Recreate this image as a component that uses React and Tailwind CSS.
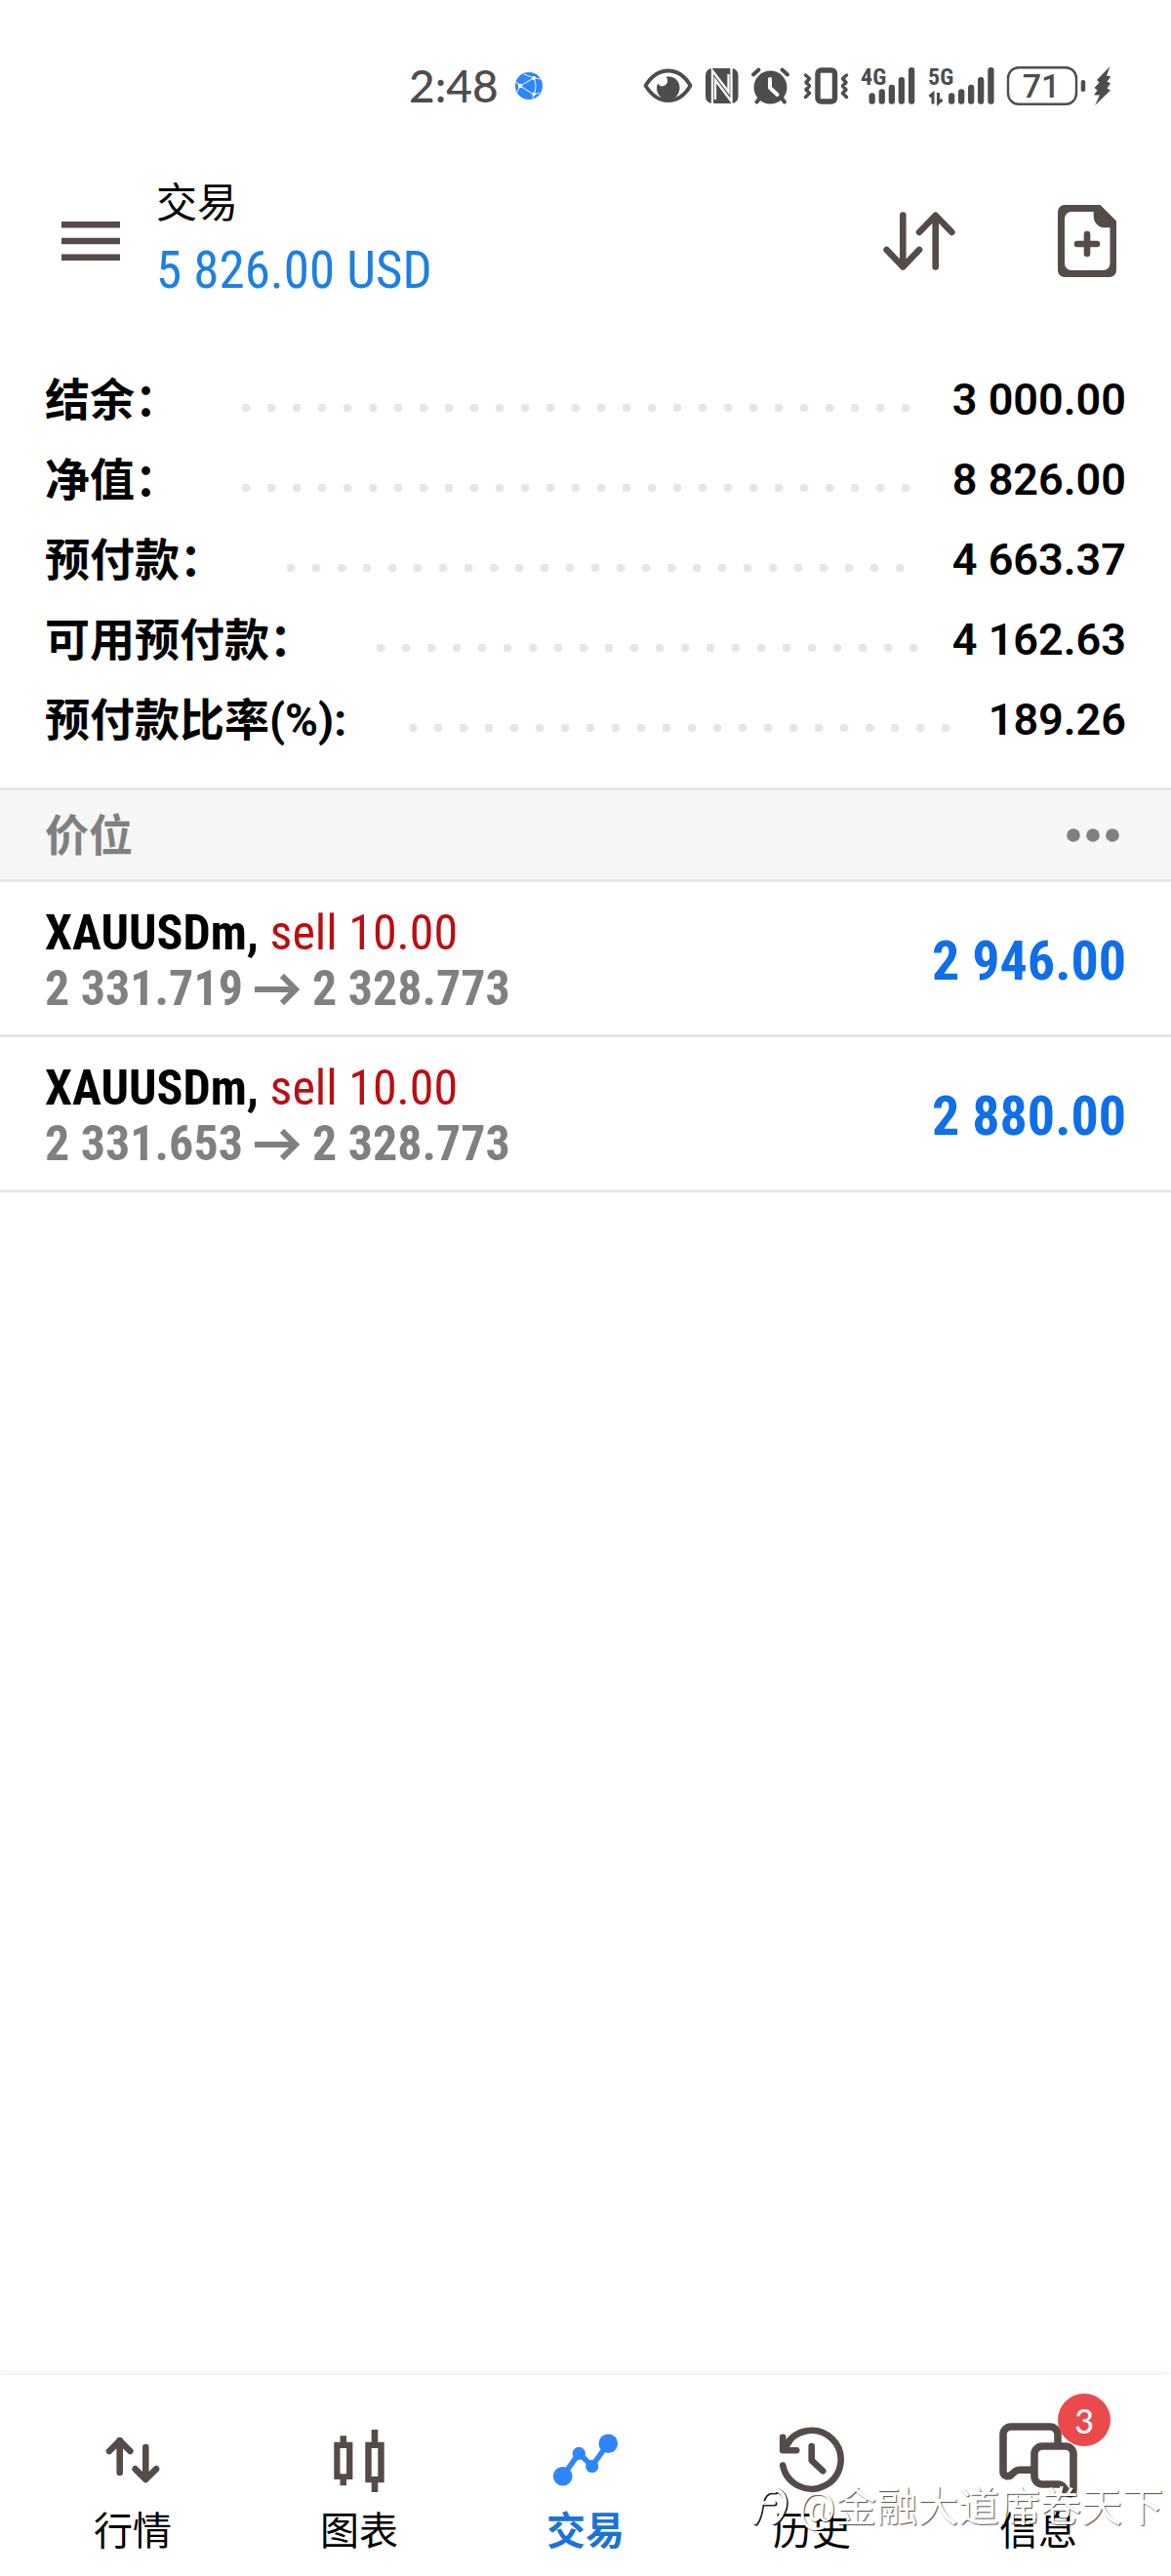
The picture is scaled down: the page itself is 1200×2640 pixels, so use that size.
const INK = '#554c49';
const STATUS = '#4d4d4d';

const summary = [
    { label: '结余：', value: '3 000.00' },
    { label: '净值：', value: '8 826.00' },
    { label: '预付款：', value: '4 663.37' },
    { label: '可用预付款：', value: '4 162.63' },
    { label: '预付款比率(%):', value: '189.26' },
];

const positions = [
    { id: 1, symbol: 'XAUUSDm', side: 'sell 10.00', open: '2 331.719', current: '2 328.773', profit: '2 946.00' },
    { id: 2, symbol: 'XAUUSDm', side: 'sell 10.00', open: '2 331.653', current: '2 328.773', profit: '2 880.00' },
];

const tabs = [
    { label: '行情', icon: QuotesIcon },
    { label: '图表', icon: ChartIcon },
    { label: '交易', icon: TradeIcon, active: true },
    { label: '历史', icon: HistoryIcon },
    { label: '信息', icon: ChatIcon, badge: 3 },
];

function QuotesIcon() {
    return (
        <svg className="size-20" viewBox="0 0 80 80" fill="none" stroke={INK} strokeWidth="6.6" strokeLinecap="round" strokeLinejoin="round">
            <path d="M26.7 53V20M16 31l10.7-10.7L37.4 31" />
            <path d="M53.3 27v33M42.6 49.3L53.3 60 64 49.300" />
        </svg>
    );
}

function ChartIcon() {
    return (
        <svg className="size-20" viewBox="0 0 80 80" fill={INK} fillRule="evenodd">
            <path d="M20.5 15.300h6.600v6.400h6.300V60h-6.300v6.300h-6.600V60h-6.200V21.700h6.200zM20.500 28v26.300h6.600V28z" />
            <path d="M52.700 9h6.600v12.700h6.400v41.600h-6.400V73h-6.600v-9.700h-6.400V21.700h6.400zM52.700 28v29h6.600V28z" />
        </svg>
    );
}

function TradeIcon() {
    return (
        <svg className="size-20" viewBox="0 0 80 80" fill="#2e86ff">
            <path d="M16.700 56.700L33.300 33.300l13.400 13L63.300 23" fill="none" stroke="#2e86ff" strokeWidth="5.5" />
            <circle cx="16.7" cy="56.7" r="9.8" />
            <circle cx="33.3" cy="33.3" r="6.6" />
            <circle cx="46.7" cy="46.7" r="6.6" />
            <circle cx="63.3" cy="23.3" r="9.8" />
        </svg>
    );
}

function HistoryIcon() {
    return (
        <svg className="size-20" viewBox="0 0 80 80" fill="none" stroke={INK} strokeWidth="6.6" strokeLinecap="round" strokeLinejoin="round">
            <path d="M10.200 45.500a30 30 0 1 0 2.800-19.500" />
            <path d="M10.200 16.700v13.600h14M12 28l5-7" />
            <path d="M39.700 26v14.500l11.600 10.800" />
        </svg>
    );
}

function ChatIcon() {
    return (
        <svg className="size-20" viewBox="0 0 80 80" fill="none" stroke={INK} strokeWidth="7.6" strokeLinejoin="round">
            <path d="M60 24V14a8 8 0 0 0-8-8H12a8 8 0 0 0-8 8v38c0 4.500 5 6 8 3.500l4-3.500q2-1.800 5-1.800h12" />
            <path d="M44 26h24a8 8 0 0 1 8 8v37c0 4-4 5-6.500 2l-3.500-5q-2-3-6-3H44a8 8 0 0 1-8-8V34a8 8 0 0 1 8-8z" />
        </svg>
    );
}

function StatusIcons() {
    return (
        <div className="flex h-10 items-center gap-3">
            <svg width="51" height="40" viewBox="0 0 51 40">
                <path d="M2.500 19.700C9 9.500 16 4.500 25.700 4.500S42.500 9.500 48.500 19.700C42.500 30 35.500 35 25.700 35S9 30 2.500 19.700z" fill="none" stroke={STATUS} strokeWidth="3.8" strokeLinejoin="round" />
                <path d="M23.500 10.800c8-2 14 4 14 11 0 7-5 12.500-11.700 12.500S14 29 14 22.500c0-2 .4-3.500 1.200-5 1.300 2.300 3.300 3.300 5.300 2.800 4.500-1 6-6 3-9.500z" fill={STATUS} />
            </svg>
            <svg width="35" height="40" viewBox="0 0 35 40">
                <rect x="1" y="2" width="33.5" height="36" rx="7" fill={STATUS} />
                <path d="M8 38V4.500L24.500 26V8" fill="none" stroke="#fff" strokeWidth="2.3" />
                <path d="M27.500 2v34L11 14v20" fill="none" stroke="#fff" strokeWidth="2.3" />
            </svg>
            <svg width="42" height="40" viewBox="0 0 42 40" fill="none" stroke={STATUS} strokeWidth="4" strokeLinecap="round">
                <circle cx="20.5" cy="21.5" r="17" fill={STATUS} stroke="none" />
                <path d="M3 8.500L8.500 3.500M32.500 3.500L38 8.500M6.500 36.500l4-5M35 36.500l-4-5" />
                <path d="M20 13v9l7.500 7" stroke="#fff" strokeLinejoin="round" />
            </svg>
            <svg width="47" height="40" viewBox="0 0 47 40" fill="none" stroke={STATUS}>
                <rect x="15" y="4" width="17.5" height="32" rx="3.5" strokeWidth="5.5" />
                <path d="M2.500 9l4 3.500-3.500 4L6.500 20 3 24l3.500 3.500-4 4M44.500 9l-4 3.500 3.500 4-3.500 3.500 3.500 4-3.500 3.500 4 4" strokeWidth="3.5" strokeLinecap="round" strokeLinejoin="round" />
            </svg>
            <svg width="57" height="40" viewBox="0 0 57 40" fill={STATUS} className="overflow-visible font-['Roboto_Condensed','Liberation_Sans_Narrow',sans-serif] text-[24px] font-bold">
                <text x="0" y="19">4G</text>
                <rect x="8.5" y="27.3" width="6.3" height="11.5" rx="3" />
                <rect x="18.6" y="23.3" width="6.3" height="15.5" rx="3" />
                <rect x="28.7" y="18.7" width="6.3" height="20" rx="3" />
                <rect x="38.7" y="11" width="6.3" height="27.8" rx="3" />
                <rect x="49" y="1" width="6.3" height="37.8" rx="3" />
            </svg>
            <svg width="68" height="40" viewBox="0 0 68 40" fill={STATUS} className="overflow-visible font-['Roboto_Condensed','Liberation_Sans_Narrow',sans-serif] text-[24px] font-bold">
                <text x="0" y="19">5G</text>
                <path d="M5 38.500V28L1.500 31M10.500 27v10.500L14.500 34" fill="none" stroke={STATUS} strokeWidth="3" />
                <rect x="21" y="27.3" width="6.3" height="11.5" rx="3" />
                <rect x="31" y="23.3" width="6.3" height="15.5" rx="3" />
                <rect x="41" y="18.7" width="6.3" height="20" rx="3" />
                <rect x="51" y="11" width="6.3" height="27.8" rx="3" />
                <rect x="61.3" y="1" width="6.3" height="37.8" rx="3" />
            </svg>
            <svg width="108" height="40" viewBox="0 0 108 40" fill={STATUS} className="font-['Roboto',sans-serif] text-[34px] font-medium">
                <rect x="2" y="1.2" width="70" height="37.6" rx="11" fill="none" stroke={STATUS} strokeWidth="2.4" />
                <text x="36" y="32" textAnchor="middle">71</text>
                <rect x="76.7" y="14" width="4.5" height="12" rx="2" />
                <path d="M106.500 0L93 14l2.500 2.500L90.500 22l3 2.500-3.500 5 6 0L91 40l16-15.500-3.500-2 3.500-5-3.500-2 4-5-4.500-1z" />
            </svg>
        </div>
    );
}

function StatusBar() {
    return (
        <div className="flex items-center justify-between pt-17 pr-[61px] pl-[419px]">
            <div className="flex h-10 items-center gap-4">
                <span className="font-['Lato',sans-serif] text-[46px] leading-10 font-medium text-[#4d4d4d]">2:48</span>
                <svg width="30" height="30" viewBox="0 0 30 30">
                    <circle cx="15" cy="15" r="14" fill="#2f86f6" />
                    <path d="M20 7L6 15l14 9M20 7q4 8 0 17M20 7L10 3M20 7l8 1M6 15L2 11M6 15l-3 6M20 24l6-2M20 24l-1 4" fill="none" stroke="#d5e8ff" strokeWidth="1.1" />
                    <circle cx="20" cy="7" r="2" fill="#fff" />
                    <circle cx="6" cy="15" r="2.2" fill="#fff" />
                    <circle cx="20" cy="23.5" r="1.8" fill="#fff" />
                </svg>
            </div>
            <StatusIcons />
        </div>
    );
}

function Header() {
    return (
        <header className="mt-[71px] flex items-center pr-14 pl-[63px]">
            <button type="button" aria-label="Menu">
                <svg width="60" height="40" viewBox="0 0 60 40" fill={INK}>
                    <path d="M0 0h60v6.600H0zM0 16.700h60v6.600H0zM0 33.400h60V40H0z" />
                </svg>
            </button>
            <div className="ml-[37px] flex-1">
                <h1 className="text-[42px] leading-[60px]">交易</h1>
                <p className="font-['Roboto_Condensed','Liberation_Sans_Narrow',sans-serif] text-[53px] leading-[76px] text-[#1c7fe6]">5 826.00 USD</p>
            </div>
            <div className="flex items-center gap-[105px]">
                <button type="button" aria-label="Sort">
                    <svg width="74" height="60" viewBox="0 0 74 60" fill="none" stroke={INK} strokeWidth="6.6" strokeLinecap="round" strokeLinejoin="round">
                        <path d="M20.300 3.500V56M3.600 39l16.700 17.500L37 39" />
                        <path d="M53.700 56.500V4M37 21L53.700 3.700 70.400 21" />
                    </svg>
                </button>
                <button type="button" aria-label="New order">
                    <svg width="60" height="74" viewBox="0 0 60 74">
                        <path d="M7 0h36.500L60 16.500V67a7 7 0 0 1-7 7H7a7 7 0 0 1-7-7V7a7 7 0 0 1 7-7zM14 7a7 7 0 0 0-7 7v46a7 7 0 0 0 7 7h32.500a7 7 0 0 0 7-7V23.300H48A11.500 11.500 0 0 1 36.700 12V7z" fill={INK} fillRule="evenodd" />
                        <path d="M30 30v20M20 40h20" stroke={INK} strokeWidth="6.6" strokeLinecap="round" />
                    </svg>
                </button>
            </div>
        </header>
    );
}

function Summary() {
    return (
        <dl className="mt-[54px] mb-7 px-[46px] text-[46px]">
            {summary.map((row) => (
                <div key={row.label} className="flex h-[82px] items-center">
                    <dt className="font-bold">{row.label}</dt>
                    <div className="mt-4 mr-8 ml-16 h-2 flex-1 bg-[radial-gradient(circle_at_4px_4px,#e6e6e6_4px,transparent_5px)] bg-[length:26px_8px] bg-repeat-x" />
                    <dd className="text-[45px] font-semibold">{row.value}</dd>
                </div>
            ))}
        </dl>
    );
}

function PositionRow({ position }) {
    return (
        <li className="flex items-center justify-between border-b-3 border-[#e6e6e6] px-[46px] pt-6 pb-[18px] font-['Roboto_Condensed','Liberation_Sans_Narrow',sans-serif]">
            <div className="text-[50px] leading-[57px] font-bold">
                <p>
                    {position.symbol}, <span className="font-normal text-[#bd0d12]">{position.side}</span>
                </p>
                <p className="flex items-center gap-3 text-[#808080]">
                    {position.open}
                    <svg width="47" height="32" viewBox="0 0 47 32" fill="none" stroke="#808080" strokeWidth="6">
                        <path d="M0 16h42M28 2l14 14-14 14" />
                    </svg>
                    {position.current}
                </p>
            </div>
            <p className="text-[56px] leading-[72px] font-bold text-[#0f6fe8]">{position.profit}</p>
        </li>
    );
}

function Positions() {
    return (
        <section>
            <div className="flex h-[97px] items-center justify-between border-y-3 border-[#e6e6e6] bg-[#f6f6f6] pr-[53px] pl-[46px] text-[#808080]">
                <h2 className="pt-1 text-[45px] font-bold">价位</h2>
                <button type="button" aria-label="More">
                    <svg width="54" height="14" viewBox="0 0 54 14" fill="#808080">
                        <circle cx="7" cy="7" r="6.8" />
                        <circle cx="27" cy="7" r="6.8" />
                        <circle cx="47" cy="7" r="6.8" />
                    </svg>
                </button>
            </div>
            <ul>
                {positions.map((p) => (
                    <PositionRow key={p.id} position={p} />
                ))}
            </ul>
        </section>
    );
}

function TabBar() {
    return (
        <nav className="mt-auto grid grid-cols-5 px-5 pt-[47px] pb-[23px] shadow-[0_-4px_8px_rgba(0,0,0,0.05)]">
            {tabs.map(({ label, icon: Icon, active, badge }) => (
                <a key={label} href="#" className="flex flex-col items-center gap-3">
                    <span className="relative">
                        <Icon />
                        {badge && (
                            <span className="absolute -top-7 left-15 flex size-[54px] items-center justify-center rounded-full bg-[#ea4a4b] font-['Lato',sans-serif] text-[34px] font-medium text-white">
                                {badge}
                            </span>
                        )}
                    </span>
                    <span className={active ? 'text-[40px] leading-11 font-bold text-[#1c72d8]' : 'text-[40px] leading-11'}>{label}</span>
                </a>
            ))}
        </nav>
    );
}

function Watermark() {
    return (
        <div className="absolute right-2 bottom-11 flex items-center gap-1 text-[42px] leading-[52px] text-white [text-shadow:1px_1px_1px_rgba(0,0,0,0.7)]">
            <svg width="42" height="42" viewBox="0 0 42 42" fill="none" strokeLinecap="round">
                <path d="M3 37C8 30 8 22 9 16 11 7 17 4 23 5M12 17h10M26 4c8 4 9 14 5 22-2 5-5 9-9 11" stroke="#222" strokeWidth="5" />
                <path d="M2 36C7 29 7 21 8 15 10 6 16 3 22 4M11 16h10M25 3c8 4 9 14 5 22-2 5-5 9-9 11" stroke="#fff" strokeWidth="4" />
            </svg>
            @金融大道席卷天下
        </div>
    );
}

export default function App() {
    return (
        <div className="relative flex min-h-screen flex-col bg-white font-['Roboto','Noto_Sans_CJK_SC',sans-serif] text-black">
            <StatusBar />
            <Header />
            <Summary />
            <Positions />
            <TabBar />
            <Watermark />
        </div>
    );
}
